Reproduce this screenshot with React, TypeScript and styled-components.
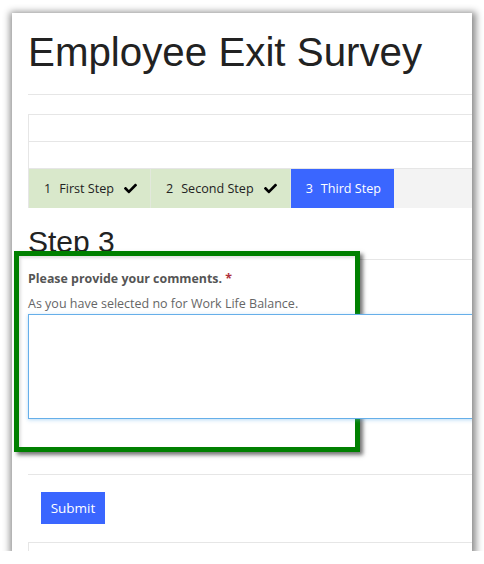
import React from 'react';
import styled, {createGlobalStyle} from 'styled-components';
import {FaCheck} from 'react-icons/fa';

const GlobalStyle = createGlobalStyle`
  html, body {
    margin: 0;
    background: #fff;
  }
  body {
    font-family: "Open Sans", "Liberation Sans", sans-serif;
  }
`;

const Frame = styled.div`
  position: relative;
  margin: 13px 0 0 12px;
  width: 460px;
  height: 538px;
  overflow: hidden;
  background: #fff;
  box-shadow: 1px 2px 7px 3px rgba(0, 0, 0, 0.45);
`;

const Page = styled.div`
  width: 520px;
  padding: 18px 0 0 16px;
`;

const Title = styled.h1`
  margin: 0 0 19px;
  font-family: "Liberation Sans", Arial, sans-serif;
  font-size: 40.3px;
  line-height: 44px;
  font-weight: normal;
  color: #222;
`;

const Rule = styled.div`
  border-top: 1px solid #e6e6e6;
`;

const Wizard = styled.div`
  margin-top: 19px;
  border-top: 1px solid #e6e6e6;
  border-left: 1px solid #e6e6e6;
`;

const BlankRow = styled.div`
  height: 26px;
  border-bottom: 1px solid #e6e6e6;
`;

const Steps = styled.div`
  display: flex;
  height: 39px;
  background: #f3f3f3;
`;

const Step = styled.div<{$state: 'done' | 'current'}>`
  display: flex;
  align-items: center;
  padding: 0 13px 0 15px;
  font-size: 12.6px;
  color: ${p => (p.$state === 'current' ? '#fff' : '#222')};
  background: ${p => (p.$state === 'current' ? '#3a66ff' : '#d9e8cb')};
  & + & {
    border-left: 1px solid #e2e8dc;
  }
`;

const StepNumber = styled.span`
  margin-right: 8px;
`;

const Tick = styled.span`
  display: flex;
  margin-left: 10px;
  color: #000;
`;

const StepTitle = styled.h2`
  margin: 17px 0 0;
  padding-bottom: 1px;
  border-bottom: 1px solid #e6e6e6;
  font-family: "Liberation Sans", Arial, sans-serif;
  font-size: 30px;
  line-height: 33px;
  font-weight: normal;
  color: #222;
`;

const Callout = styled.div`
  position: absolute;
  left: 2px;
  top: 238px;
  width: 346px;
  height: 201px;
  box-sizing: border-box;
  border: 5px solid #008000;
  background: #fff;
  box-shadow: 3px 3px 4px rgba(0, 0, 0, 0.55), inset 2px 2px 3px rgba(0, 0, 0, 0.12);
  z-index: 1;
`;

const Field = styled.div`
  position: relative;
  z-index: 2;
  padding-top: 10px;
`;

const Label = styled.div`
  font-size: 12.4px;
  line-height: 17px;
  font-weight: bold;
  color: #555;
`;

const Required = styled.span`
  color: #b0303a;
`;

const Help = styled.div`
  margin-top: 8px;
  font-size: 12.5px;
  line-height: 17px;
  color: #666;
`;

const Comments = styled.textarea`
  display: block;
  box-sizing: border-box;
  margin-top: 2px;
  width: 100%;
  height: 105px;
  border: 1px solid #66afe9;
  box-shadow: 0 1px 4px rgba(102, 175, 233, 0.45);
  outline: none;
  resize: none;
`;

const Footer = styled.div`
  margin-top: 55px;
  border-top: 1px solid #e6e6e6;
  padding: 17px 0 18px 13px;
`;

const SubmitButton = styled.button`
  width: 64px;
  height: 32px;
  border: 0;
  background: #3a66ff;
  color: #fff;
  font-family: "Open Sans", sans-serif;
  font-size: 13.5px;
  padding: 0;
`;

const NextBox = styled.div`
  height: 40px;
  border-top: 1px solid #e6e6e6;
  border-left: 1px solid #e6e6e6;
`;

const steps = [
  {n: 1, title: 'First Step', state: 'done' as const},
  {n: 2, title: 'Second Step', state: 'done' as const},
  {n: 3, title: 'Third Step', state: 'current' as const},
];

export default function App() {
  return (
    <>
      <GlobalStyle/>
      <Frame>
        <Page>
          <Title>Employee Exit Survey</Title>
          <Rule/>
          <Wizard>
            <BlankRow/>
            <BlankRow/>
            <Steps>
              {steps.map(s => (
                <Step key={s.n} $state={s.state}>
                  <StepNumber>{s.n}</StepNumber>
                  {s.title}
                  {s.state === 'done' && <Tick><FaCheck size={13}/></Tick>}
                </Step>
              ))}
            </Steps>
          </Wizard>
          <StepTitle>Step 3</StepTitle>
          <Field>
            <Label>Please provide your comments. <Required>*</Required></Label>
            <Help>As you have selected no for Work Life Balance.</Help>
            <Comments/>
          </Field>
          <Footer>
            <SubmitButton>Submit</SubmitButton>
          </Footer>
          <NextBox/>
        </Page>
        <Callout/>
      </Frame>
    </>
  );
}
